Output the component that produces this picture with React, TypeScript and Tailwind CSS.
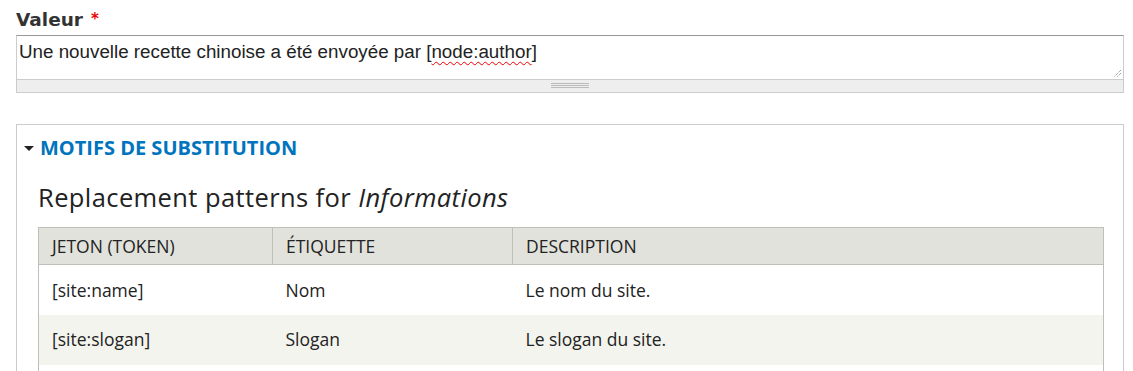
import React from "react";

const rows = [
  { token: "[site:name]", label: "Nom", desc: "Le nom du site." },
  { token: "[site:slogan]", label: "Slogan", desc: "Le slogan du site." },
  { token: "[site:mail]", label: "E-mail", desc: "L'adresse e-mail du site." },
];

export default function App() {
  return (
    <div className="w-[1133px] h-[371px] overflow-hidden bg-white text-[#333] [font-family:'Open_Sans',sans-serif]">
      <div className="pl-4 pr-[9px] pt-[8px]">
        <label className="flex items-start gap-[8px] text-[18.5px] font-bold leading-[24px] text-[#333] [font-family:'DejaVu_Sans',sans-serif]">
          <span>Valeur</span>
          <span className="text-[#e00] text-[15px] leading-[20px] mt-[1px]">*</span>
        </label>
        <div className="mt-[3px]">
          <div className="relative h-[45px] border border-[#ccc] border-t-[#999] bg-white">
            <div className="px-[2px] pt-[5px] text-[18.8px] leading-[22px] text-[#222] [font-family:'Liberation_Sans',Arial,sans-serif]">
              Une nouvelle recette chinoise a été envoyée par [<span className="underline decoration-wavy decoration-[#e00] decoration-1 underline-offset-[3px]">node:author</span>]
            </div>
            <svg className="absolute right-[1px] bottom-[1px]" width="10" height="10" viewBox="0 0 10 10">
              <path d="M9 2 L2 9 M9 5 L5 9" stroke="#777" strokeWidth="1" strokeDasharray="1 1" fill="none" />
            </svg>
          </div>
          <div className="h-[13px] border border-t-0 border-[#ccc] bg-[#eee] flex justify-center items-start pt-[3px]">
            <div className="w-[38px] h-[5px] border-y border-[#bbb] flex flex-col justify-center">
              <div className="h-px bg-[#bbb]" />
            </div>
          </div>
        </div>

        <fieldset className="mt-[31px] border border-[#ccc] pb-4">
          <div className="flex items-center pl-[7px] pt-[11px] h-[35px]">
            <svg width="10" height="6" viewBox="0 0 10 6" className="mr-[6px] mt-[2px]">
              <path d="M0 0 L10 0 L5 5 Z" fill="#222" />
            </svg>
            <span className="text-[20px] font-bold text-[#0074bd] [font-family:'Open_Sans',sans-serif]">MOTIFS DE SUBSTITUTION</span>
          </div>
          <div className="pl-[21px] pr-[19px]">
            <h2 className="mt-[21px] text-[25.5px] leading-[32px] font-medium text-[#222] [font-family:'Open_Sans',sans-serif] tracking-[0.4px]">
              Replacement patterns for <em className="italic">Informations</em>
            </h2>
            <table className="mt-[14px] w-full border-collapse text-[17.5px] text-[#222]">
              <thead>
                <tr className="bg-[#e1e2dc] h-[37px] text-left">
                  <th className="w-[234px] border border-[#bfbfba] pl-[13px] font-normal uppercase">Jeton (token)</th>
                  <th className="w-[240px] border border-[#bfbfba] pl-[13px] font-normal uppercase">Étiquette</th>
                  <th className="border border-[#bfbfba] pl-[13px] font-normal uppercase">Description</th>
                </tr>
              </thead>
              <tbody>
                {rows.map((r, i) => (
                  <tr key={r.token} className={`h-[50px] ${i % 2 === 1 ? "bg-[#f3f4ee]" : "bg-white"}`}>
                    <td className="border-l border-[#bfbfba] pl-[13px]">{r.token}</td>
                    <td className="pl-[13px]">{r.label}</td>
                    <td className="border-r border-[#bfbfba] pl-[13px]">{r.desc}</td>
                  </tr>
                ))}
              </tbody>
            </table>
          </div>
        </fieldset>
      </div>
    </div>
  );
}
